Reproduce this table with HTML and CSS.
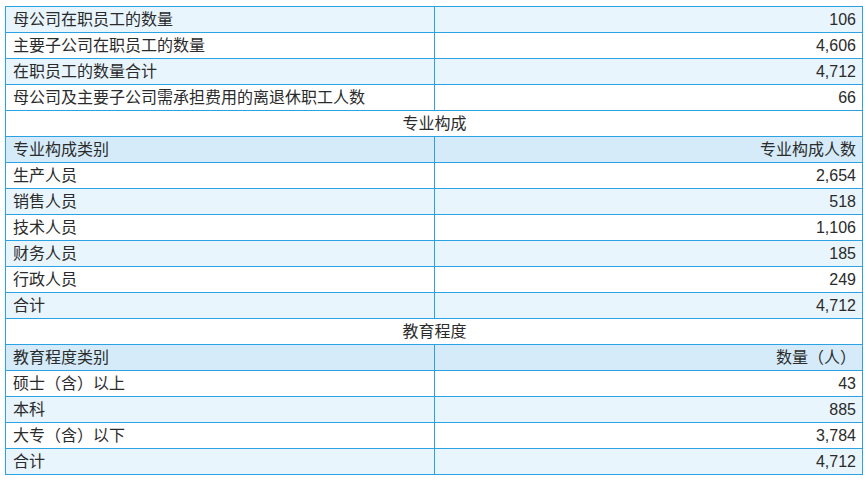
FILE: index.html
```html
<!DOCTYPE html>
<html lang="zh-CN">
<head>
<meta charset="utf-8">
<link rel="stylesheet" href="styles.css">
</head>
<body>
<table class="staff">
  <colgroup><col class="c1"><col class="c2"></colgroup>
  <tbody>
    <tr class="lt"><td>母公司在职员工的数量</td><td class="num">106</td></tr>
    <tr class="wh"><td>主要子公司在职员工的数量</td><td class="num">4,606</td></tr>
    <tr class="lt"><td>在职员工的数量合计</td><td class="num">4,712</td></tr>
    <tr class="wh"><td>母公司及主要子公司需承担费用的离退休职工人数</td><td class="num">66</td></tr>
    <tr class="wh"><td class="sec" colspan="2">专业构成</td></tr>
    <tr class="hd"><td>专业构成类别</td><td class="num">专业构成人数</td></tr>
    <tr class="wh"><td>生产人员</td><td class="num">2,654</td></tr>
    <tr class="lt"><td>销售人员</td><td class="num">518</td></tr>
    <tr class="wh"><td>技术人员</td><td class="num">1,106</td></tr>
    <tr class="lt"><td>财务人员</td><td class="num">185</td></tr>
    <tr class="wh"><td>行政人员</td><td class="num">249</td></tr>
    <tr class="lt"><td>合计</td><td class="num">4,712</td></tr>
    <tr class="wh"><td class="sec" colspan="2">教育程度</td></tr>
    <tr class="hd"><td>教育程度类别</td><td class="num">数量（人）</td></tr>
    <tr class="wh"><td>硕士（含）以上</td><td class="num">43</td></tr>
    <tr class="lt"><td>本科</td><td class="num">885</td></tr>
    <tr class="wh"><td>大专（含）以下</td><td class="num">3,784</td></tr>
    <tr class="lt"><td>合计</td><td class="num">4,712</td></tr>
  </tbody>
</table>
</body>
</html>
```
FILE: styles.css
```css
html, body {
  margin: 0;
  padding: 0;
  background: #ffffff;
}
body {
  padding: 6px 0 0 5px;
  font-family: "Liberation Sans", "Noto Sans CJK SC", sans-serif;
  font-size: 16px;
  color: #2b2b2b;
}
.staff {
  border-collapse: collapse;
  width: 857px;
  table-layout: fixed;
  border: 1.5px solid #2aa2e4;
}
.c1 { width: 429px; }
.c2 { width: 428px; }
.staff td {
  border: 1px solid #2aa2e4;
  height: 25px;
  padding: 0 6px 0 7px;
  line-height: 25px;
  white-space: nowrap;
  box-sizing: border-box;
}
.staff .num { text-align: right; }
.staff .sec { text-align: center; }
.lt { background: #e9f5fd; }
.wh { background: #ffffff; }
.hd { background: #d5ebf9; }
```
